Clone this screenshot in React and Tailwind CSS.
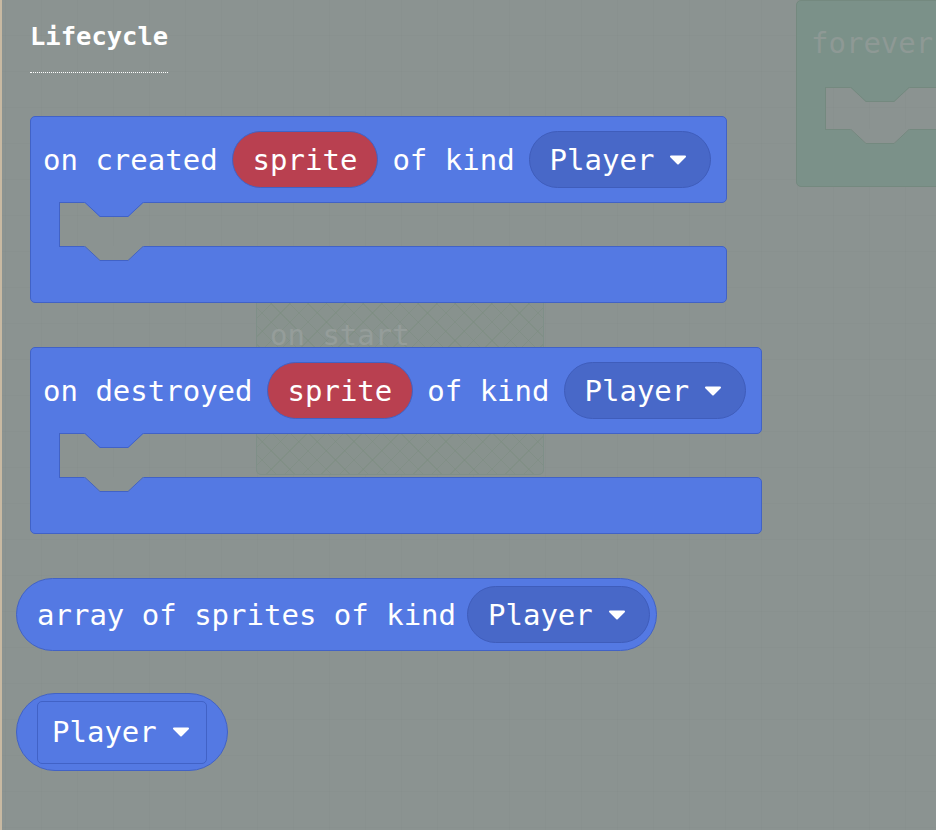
import React from 'react';

// flyout colours
const Label = ({ children }) => (
  <span className="leading-[34px] whitespace-pre">{children}</span>
);

const Caret = () => (
  <svg width="18" height="10" viewBox="0 0 18 10" className="shrink-0">
    <path d="M2 1.5 H16 L9 8.5 Z" fill="#fff" stroke="#fff" strokeWidth="2" strokeLinejoin="round" />
  </svg>
);

const VarPill = () => (
  <span className="flex items-center h-[57px] px-[20px] rounded-full bg-[#b94050] border border-[#4262c4]">
    <Label>sprite</Label>
  </span>
);

const Dropdown = () => (
  <span className="flex items-center h-[57px] pl-[20px] pr-[23px] gap-[15px] rounded-full bg-[#4868c8] border border-[#3f5dbb]">
    <Label>Player</Label>
    <Caret />
  </span>
);

// notch drawn where the statement slot meets the block
const Notch = ({ fill, stroke, className }) => (
  <svg width="60" height="16" viewBox="0 0 60 16" className={className}>
    <path d="M0 0 H60 L44 15 H16 Z" fill={fill} />
    <path d="M0.5 0 L16 14.5 H44 L59.5 0" fill="none" stroke={stroke} strokeWidth="1" strokeLinejoin="round" />
  </svg>
);

const CBlock = ({ label }) => (
  <div className="flex flex-col w-fit ml-[14px]">
    <div className="relative flex items-center h-[87px] gap-[14px] pl-[12px] pr-[15px] bg-[#5479e3] border border-[#4162c6] rounded-t-[5px] rounded-br-[5px]">
      <Label>{label}</Label>
      <VarPill />
      <Label>of kind</Label>
      <Dropdown />
      <Notch fill="#5479e3" stroke="#4162c6" className="absolute left-[53px] top-full" />
    </div>
    <div className="flex h-[43px]">
      <div className="relative z-10 -my-px w-[30px] bg-[#5479e3] border-x border-[#4162c6]" />
    </div>
    <div className="relative h-[57px] bg-[#5479e3] border border-[#4162c6] rounded-b-[5px] rounded-tr-[5px]">
      <Notch fill="#8b9391" stroke="#4162c6" className="absolute left-[53px] -top-px" />
    </div>
  </div>
);

export default function App() {
  return (
    <div className="relative w-[936px] h-[830px] overflow-hidden border-l-2 border-[#c8b9a2] bg-[#8b9391] bg-[linear-gradient(to_right,rgba(0,0,0,0.015)_1px,transparent_1px),linear-gradient(rgba(0,0,0,0.015)_1px,transparent_1px)] bg-size-[36px_36px] bg-position-[3px_-1px] font-['DejaVu_Sans_Mono',monospace] text-white text-[29px]">
      {/* workspace blocks behind the flyout */}
      <div className="absolute left-[794px] top-0 w-[200px] flex flex-col">
        <div className="relative flex items-center h-[88px] pl-[14px] pb-[2px] bg-[#7b9189] border border-[#74897f] rounded-t-[5px] rounded-br-[5px] text-[#8e9995]">
          <span className="leading-[34px]">forever</span>
          <Notch fill="#7b9189" stroke="#74897f" className="absolute left-[53px] top-full" />
        </div>
        <div className="flex h-[41px]">
          <div className="relative z-10 -my-px w-[30px] bg-[#7b9189] border-x border-[#74897f]" />
        </div>
        <div className="relative h-[58px] bg-[#7b9189] border border-[#74897f] rounded-b-[5px] rounded-tr-[5px]">
          <Notch fill="#8b9391" stroke="#74897f" className="absolute left-[53px] -top-px" />
        </div>
      </div>

      <div className="absolute left-[254px] top-[285px] w-[288px] h-[190px] rounded-[5px] border border-[#7f8f88] bg-[#88928e] bg-[repeating-linear-gradient(45deg,rgba(122,140,126,0.45)_0_1px,transparent_1px_13px),repeating-linear-gradient(-45deg,rgba(122,140,126,0.45)_0_1px,transparent_1px_13px)] pl-[13px] pt-[28px] text-[#959d9a]">
        <span className="leading-[34px]">on start</span>
      </div>

      {/* flyout */}
      <div className="relative flex flex-col items-start pt-[21px] pl-[14px]">
        <div className="ml-[14px] pb-[21px] border-b border-dotted border-white font-bold text-[25.5px] leading-[30px]">
          Lifecycle
        </div>

        <div className="mt-[43px]">
          <CBlock label="on created" />
        </div>
        <div className="mt-[44px]">
          <CBlock label="on destroyed" />
        </div>

        <div className="mt-[44px] flex items-center w-fit h-[73px] pl-[20px] pr-[6px] gap-[11px] rounded-full bg-[#5479e3] border border-[#4162c6]">
          <Label>array of sprites of kind</Label>
          <Dropdown />
        </div>

        <div className="mt-[42px] flex items-center w-fit h-[78px] px-[20px] rounded-full bg-[#5479e3] border border-[#4162c6]">
          <div className="flex items-center h-[63px] pl-[14px] pr-[16px] gap-[15px] rounded-[5px] border border-[#4162c6]">
            <Label>Player</Label>
            <Caret />
          </div>
        </div>
      </div>
    </div>
  );
}
